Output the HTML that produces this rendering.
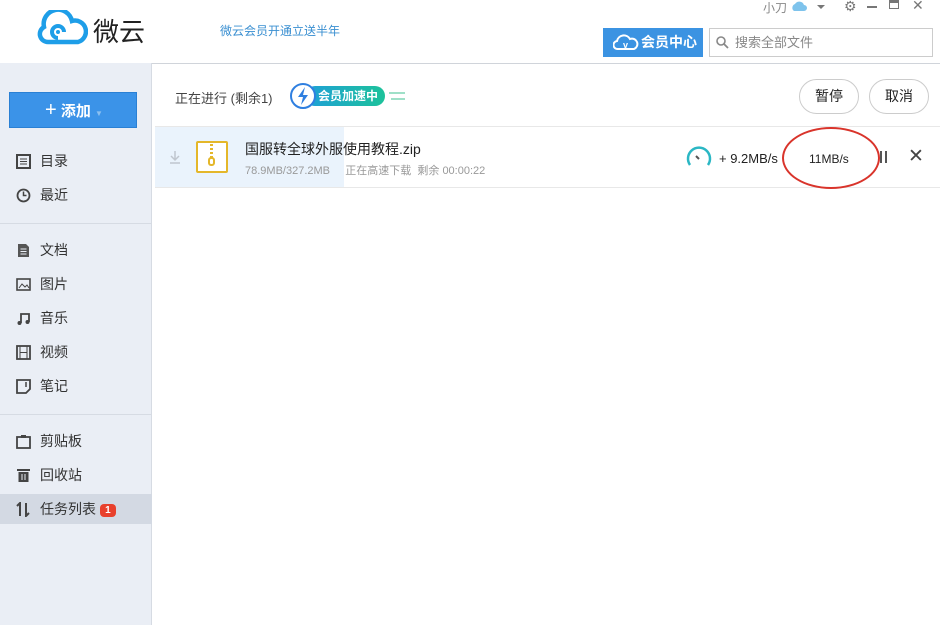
<!DOCTYPE html>
<html><head><meta charset="utf-8"><style>
*{margin:0;padding:0;box-sizing:border-box}
body{width:940px;height:625px;overflow:hidden;background:#fff;font-family:"Liberation Sans","Noto Sans CJK SC",sans-serif;color:#333;position:relative}
.a{position:absolute}
.side{left:0;top:63px;width:152px;height:562px;background:#eaeef5;border-right:1px solid #d6dbe3}
.it{position:absolute;left:0;width:152px;height:30px;font-size:14px;color:#333;line-height:30px;padding-left:40px}
.ic{position:absolute;left:16px;top:8px;width:15px;height:15px}
.sep{position:absolute;left:0;width:152px;height:1px;background:#d6dbe3}
</style></head><body>
<div class="a" style="left:0;top:63px;width:940px;height:1px;background:#d0d4da"></div>
<svg class="a" style="left:36px;top:10px" width="52" height="36" viewBox="0 0 52 36"><path d="M12 32 A8 8 0 0 1 8 17 A14 14 0 0 1 36 11 A10 10 0 0 1 42 32 Z" fill="none" stroke="#1e9ee8" stroke-width="4.5"/><path d="M22 28 A6 6 0 1 1 28 22" fill="none" stroke="#1e9ee8" stroke-width="4"/><circle cx="22" cy="22" r="2" fill="#1e9ee8"/></svg>
<div class="a" style="left:93px;top:12px;font-size:26px;color:#222">微云</div>
<div class="a" style="left:220px;top:22px;font-size:12px;color:#3a8fd1">微云会员开通立送半年</div>
<div class="a" style="left:763px;top:-1px;font-size:12px;color:#888">小刀</div>
<svg class="a" style="left:791px;top:0" width="16" height="12"><path d="M3 11 A4 4 0 0 1 4 4 A5 5 0 0 1 13 5 A3 3 0 0 1 13 11Z" fill="#7ec3ec"/></svg>
<div class="a" style="left:817px;top:5px;border:4px solid transparent;border-top-color:#777"></div>
<div class="a" style="left:844px;top:-2px;font-size:14px;color:#777">⚙</div>
<div class="a" style="left:867px;top:6px;width:10px;height:2px;background:#777"></div>
<div class="a" style="left:889px;top:0;width:10px;height:9px;border:1px solid #777;border-top-width:3px"></div>
<div class="a" style="left:912px;top:-3px;font-size:14px;color:#777">✕</div>
<div class="a" style="left:603px;top:28px;width:100px;height:29px;background:#3b93e2;color:#fff;font-size:14px;font-weight:bold;line-height:29px;padding-left:38px">会员中心</div>
<svg class="a" style="left:613px;top:34px" width="26" height="17"><path d="M5 15 A4 4 0 0 1 4 7 A7 7 0 0 1 17 5 A5 5 0 0 1 21 15Z" fill="none" stroke="#fff" stroke-width="2"/><text x="10" y="14" font-size="9" fill="#fff" font-family="Liberation Sans" font-weight="bold">v</text></svg>
<div class="a" style="left:709px;top:28px;width:224px;height:29px;border:1px solid #ccc;font-size:13px;color:#888;line-height:27px;padding-left:25px">搜索全部文件</div>
<svg class="a" style="left:715px;top:35px" width="14" height="14"><circle cx="6" cy="6" r="4" fill="none" stroke="#888" stroke-width="1.6"/><path d="M9 9 L13 13" stroke="#888" stroke-width="1.8"/></svg>
<div class="a side">
<div class="a" style="left:9px;top:29px;width:128px;height:36px;background:#3b93e8;border:1px solid #2a80d4;color:#fff;font-size:15px;font-weight:bold;line-height:34px;padding-left:35px"><span style="font-size:20px;font-weight:normal">+</span> 添加 <span style="font-size:8px;color:#8cc0f0">▼</span></div>
<div class="it" style="top:83px"><svg class="ic" viewBox="0 0 15 15"><rect x="1" y="1" width="13" height="13" fill="none" stroke="#444" stroke-width="2"/><path d="M4 5h7M4 7.5h7M4 10h7" stroke="#444"/></svg>目录</div>
<div class="it" style="top:117px"><svg class="ic" viewBox="0 0 15 15"><circle cx="7.5" cy="7.5" r="6" fill="none" stroke="#444" stroke-width="1.8"/><path d="M7.5 3.5v4h3" fill="none" stroke="#444" stroke-width="1.5"/></svg>最近</div>
<div class="sep" style="top:160px"></div>
<div class="it" style="top:172px"><svg class="ic" viewBox="0 0 15 15"><path d="M2 1h8l3 3v10H2z" fill="#555"/><path d="M4.5 6h6M4.5 8.5h6M4.5 11h6" stroke="#eaeef5"/></svg>文档</div>
<div class="it" style="top:206px"><svg class="ic" viewBox="0 0 15 15"><rect x="1" y="2" width="13" height="11" fill="none" stroke="#444" stroke-width="1.6"/><path d="M3 11l3-4 3 3 2-2 2 3" fill="none" stroke="#444"/></svg>图片</div>
<div class="it" style="top:240px"><svg class="ic" viewBox="0 0 15 15"><path d="M5 12V3h8v8" fill="none" stroke="#444" stroke-width="1.8"/><circle cx="3.5" cy="12" r="2" fill="#444"/><circle cx="11.5" cy="11" r="2" fill="#444"/></svg>音乐</div>
<div class="it" style="top:274px"><svg class="ic" viewBox="0 0 15 15"><rect x="1" y="1" width="13" height="13" fill="none" stroke="#444" stroke-width="1.8"/><path d="M4 1v13M11 1v13M4 7.5h7" stroke="#444"/></svg>视频</div>
<div class="it" style="top:308px"><svg class="ic" viewBox="0 0 15 15"><path d="M1 1h13v9l-4 4H1z" fill="none" stroke="#444" stroke-width="1.8"/><path d="M10 3v5" stroke="#444" stroke-width="1.5"/></svg>笔记</div>
<div class="sep" style="top:351px"></div>
<div class="it" style="top:363px"><svg class="ic" viewBox="0 0 15 15"><rect x="1" y="3" width="13" height="11" fill="none" stroke="#444" stroke-width="1.8"/><rect x="5" y="1" width="5" height="3" fill="#444"/></svg>剪贴板</div>
<div class="it" style="top:397px"><svg class="ic" viewBox="0 0 15 15"><path d="M1 2h13" stroke="#444" stroke-width="2"/><path d="M2.5 4h10v10h-10z" fill="#444"/><path d="M6 6v6M9 6v6" stroke="#eaeef5"/></svg>回收站</div>
<div class="it" style="top:431px;background:#d3d9e3"><svg class="ic" viewBox="0 0 15 15"><path d="M4 14V1L1 4M10 1v13l3-3" fill="none" stroke="#444" stroke-width="2"/></svg>任务列表 <span style="display:inline-block;width:16px;height:13px;background:#e8402c;border-radius:4px;color:#fff;font-size:10px;line-height:13px;text-align:center;font-weight:bold;vertical-align:1px">1</span></div>
</div>
<div class="a" style="left:175px;top:88px;font-size:13px;color:#444">正在进行 (剩余1)</div>
<div class="a" style="left:305px;top:86px;width:80px;height:20px;background:linear-gradient(90deg,#1e9fd8,#1dc29a);border-radius:10px;color:#fff;font-size:12px;font-weight:bold;line-height:20px;padding-left:13px">会员加速中</div>
<svg class="a" style="left:289px;top:82px" width="30" height="28"><circle cx="14" cy="14" r="12" fill="#fff" stroke="#2f7fe0" stroke-width="2"/><path d="M16 5l-7 10h5l-2 8 7-10h-5z" fill="#2f7fe0"/></svg>
<div class="a" style="left:389px;top:92px;width:16px;height:2px;background:#9fe0c8"></div>
<div class="a" style="left:391px;top:98px;width:14px;height:2px;background:#9fe0c8"></div>
<div class="a" style="left:799px;top:79px;width:60px;height:35px;border:1px solid #ccc;border-radius:18px;font-size:14px;text-align:center;line-height:33px;color:#222">暂停</div>
<div class="a" style="left:869px;top:79px;width:60px;height:35px;border:1px solid #ccc;border-radius:18px;font-size:14px;text-align:center;line-height:33px;color:#222">取消</div>
<div class="a" style="left:155px;top:126px;width:785px;height:1px;background:#e8e8e8"></div>
<div class="a" style="left:155px;top:127px;width:189px;height:60px;background:#eaf3fc"></div>
<div class="a" style="left:155px;top:187px;width:785px;height:1px;background:#e8e8e8"></div>
<svg class="a" style="left:168px;top:150px" width="14" height="14"><path d="M7 1v8M3 6l4 4 4-4M2 13h10" fill="none" stroke="#c0c6ce" stroke-width="1.5"/></svg>
<div class="a" style="left:196px;top:141px;width:32px;height:32px;border:2px solid #e4b72a;border-radius:2px;background:#fff"></div>
<div class="a" style="left:210px;top:144px;width:3px;height:14px;background:repeating-linear-gradient(#e4b72a 0 2px,#fff 2px 4px)"></div>
<div class="a" style="left:208px;top:157px;width:7px;height:9px;border:2px solid #e4b72a;border-radius:3px"></div>
<div class="a" style="left:245px;top:139px;font-size:14px;color:#222">国服转全球外服使用教程.zip</div>
<div class="a" style="left:245px;top:162px;font-size:11px;color:#999">78.9MB/327.2MB &nbsp;&nbsp;&nbsp; 正在高速下载 &nbsp;剩余 00:00:22</div>
<svg class="a" style="left:684px;top:143px" width="30" height="24"><path d="M6 22 A11 11 0 1 1 24 22" fill="none" stroke="#2bb7c4" stroke-width="2.5"/><path d="M12 13l3 3" stroke="#555" stroke-width="2"/></svg>
<div class="a" style="left:719px;top:151px;font-size:13px;color:#222">+ 9.2MB/s</div>
<div class="a" style="left:809px;top:152px;font-size:12px;color:#222">11MB/s</div>
<div class="a" style="left:782px;top:127px;width:98px;height:62px;border:2px solid #d9342b;border-radius:50%"></div>
<div class="a" style="left:880px;top:151px;width:2px;height:12px;background:#555"></div>
<div class="a" style="left:885px;top:151px;width:2px;height:12px;background:#555"></div>
<div class="a" style="left:908px;top:145px;font-size:19px;color:#444">✕</div>
</body></html>
